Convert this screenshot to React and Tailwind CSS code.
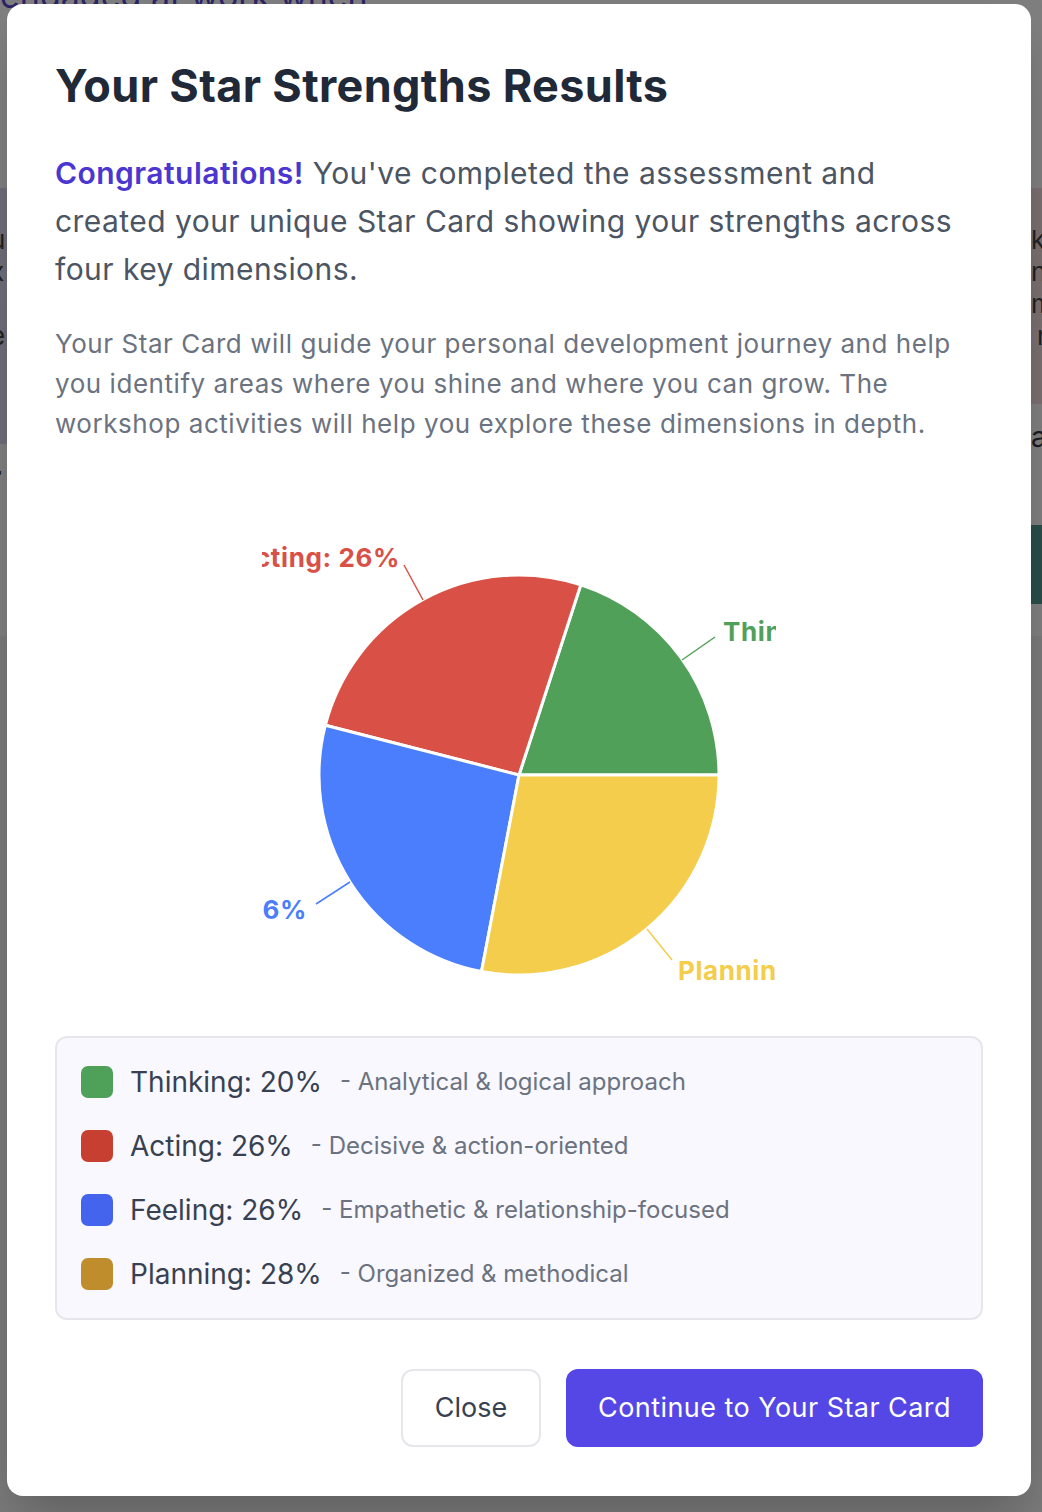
const slices = [
  { name: "Thinking", value: 20, color: "#51a05a", d: "M257,250 L457,250 A200,200 0 0 0 318.8,59.8 Z", line: "M420,135 L453,112", tx: 461, ty: 106, anchor: "start" },
  { name: "Acting", value: 26, color: "#d95046", d: "M257,250 L318.8,59.8 A200,200 0 0 0 63.3,200.3 Z", line: "M161,75 L142,40", tx: 138, ty: 32, anchor: "end" },
  { name: "Feeling", value: 26, color: "#4a7efc", d: "M257,250 L63.3,200.3 A200,200 0 0 0 219.5,446.5 Z", line: "M88,357 L54,379", tx: 45, ty: 384, anchor: "end" },
  { name: "Planning", value: 28, color: "#f3cd4b", d: "M257,250 L219.5,446.5 A200,200 0 0 0 457,250 Z", line: "M385,404 L410,435", tx: 416, ty: 445, anchor: "start" },
];

const legend = [
  { label: "Thinking: 20%", desc: "- Analytical & logical approach", color: "bg-[#4fa058]" },
  { label: "Acting: 26%", desc: "- Decisive & action-oriented", color: "bg-[#c73f31]" },
  { label: "Feeling: 26%", desc: "- Empathetic & relationship-focused", color: "bg-[#4564ee]" },
  { label: "Planning: 28%", desc: "- Organized & methodical", color: "bg-[#bf8d2b]" },
];

function StarPie() {
  return (
    <svg width="514" height="500" viewBox="0 0 514 500" className="overflow-hidden">
      {slices.map((s) => (
        <path key={s.name} d={s.d} fill={s.color} stroke="#ffffff" strokeWidth="3" strokeLinejoin="round" />
      ))}
      {slices.map((s) => (
        <g key={s.name + "-label"}>
          <path d={s.line} stroke={s.color} strokeWidth="1.5" fill="none" />
          <text
            x={s.tx}
            y={s.ty}
            textAnchor={s.anchor}
            dominantBaseline="central"
            fill={s.color}
            fontFamily="Inter, 'Noto Sans', sans-serif"
            fontWeight="700"
            fontSize="26"
            letterSpacing="0.6"
          >
            {s.name}: {s.value}%
          </text>
        </g>
      ))}
    </svg>
  );
}

export default function App() {
  return (
    <div className="relative h-[1512px] overflow-hidden bg-[#7f7f7f] font-['Inter','Noto_Sans',sans-serif]">
      {/* page behind the overlay */}
      <div className="flex flex-col">
        <div className="-mt-[24px] text-[34px] leading-[40px] text-[#2c2468] whitespace-nowrap">engaged at work when</div>
        <div className="mt-[172px] flex justify-between">
          <div className="h-[256px] w-[7px] overflow-hidden bg-[#6e6d79] pt-[36px] text-[26px] leading-[32px] text-[#222]">
            <p className="-ml-[10px]">u</p>
            <p className="-ml-[10px]">x</p>
            <p className="-ml-[8px]">t</p>
            <p className="-ml-[10px]">e</p>
          </div>
          <div className="h-[216px] w-[11px] overflow-hidden bg-[#7a6f71] pt-[36px] text-[26px] leading-[32px] text-[#222]">
            <p>k</p>
            <p>n</p>
            <p>m</p>
            <p className="ml-[6px]">r</p>
          </div>
        </div>
        <div className="flex justify-between">
          <div className="mt-[12px] w-[7px] overflow-hidden text-[28px] font-bold text-[#1a1a22]"><span className="-ml-[10px] block">r</span></div>
          <div className="mt-[-28px] w-[11px] overflow-hidden text-[28px] text-[#1a1a22]"><span className="block">a</span></div>
        </div>
        <div className="mt-[27px] flex justify-end">
          <div className="h-[79px] w-[11px] bg-[#2a4d4a]"></div>
        </div>
        <div className="mt-[32px] h-[876px] bg-[#7a7a7a]"></div>
      </div>

      {/* modal */}
      <div className="absolute inset-0 flex justify-start pl-[7px] pt-[4px]">
        <div className="h-[1492px] w-[1024px] rounded-[16px] bg-white px-[48px] pt-[50px] shadow-2xl">
          <h1 className="text-[45px] font-bold leading-[64px] tracking-[0.35px] text-[#1f2937]">Your Star Strengths Results</h1>

          <p className="mt-[31px] text-[30px] leading-[48px] tracking-[0.45px] text-[#4b5563]">
            <span className="font-semibold text-[#4b36d0]">Congratulations!</span> You've completed the assessment and
            created your unique Star Card showing your strengths across four key dimensions.
          </p>

          <p className="mt-[31px] text-[26px] leading-[40px] tracking-[0.55px] text-[#6b7280]">
            Your Star Card will guide your personal development journey and help you identify areas where you shine and
            where you can grow. The workshop activities will help you explore these dimensions in depth.
          </p>

          <div className="mt-[81px] flex justify-center">
            <StarPie />
          </div>

          <div className="mt-[11px] flex flex-col gap-[24px] rounded-[12px] border-2 border-[#e5e7eb] bg-[#f8f8fe] px-[24px] py-[24px]">
            {legend.map((l) => (
              <div key={l.label} className="flex h-[40px] items-center">
                <div className={"h-[32px] w-[32px] rounded-[7px] " + l.color}></div>
                <span className="ml-[17px] text-[28px] text-[#374151]">{l.label}</span>
                <span className="ml-[18px] text-[24px] text-[#6b7280]">{l.desc}</span>
              </div>
            ))}
          </div>

          <div className="mt-[49px] flex justify-end gap-[25px]">
            <button className="h-[78px] w-[140px] rounded-[12px] border-2 border-[#e5e7eb] bg-white text-[27px] text-[#374151]">
              Close
            </button>
            <button className="h-[78px] w-[417px] rounded-[12px] bg-[#5447e5] text-[27px] tracking-[0.45px] text-white">
              Continue to Your Star Card
            </button>
          </div>
        </div>
      </div>
    </div>
  );
}
